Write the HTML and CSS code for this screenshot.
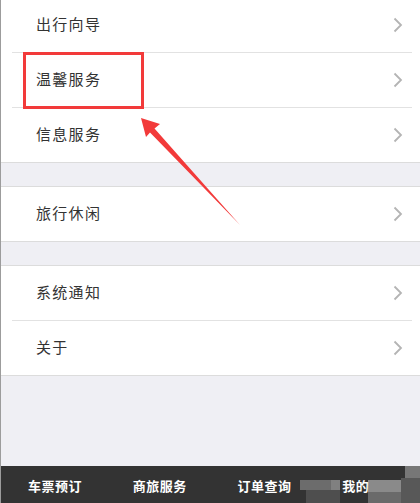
FILE: index.html
```html
<!DOCTYPE html>
<html lang="zh">
<head>
<meta charset="utf-8">
<link rel="stylesheet" href="styles.css">
</head>
<body>
<div class="page">
  <div class="group group-first">
    <div class="row"><span class="label">出行向导</span><svg class="chev" viewBox="0 0 10 16"><path d="M1.5 1.5 L8 8 L1.5 14.5"/></svg></div>
    <div class="row"><span class="label">温馨服务</span><svg class="chev" viewBox="0 0 10 16"><path d="M1.5 1.5 L8 8 L1.5 14.5"/></svg></div>
    <div class="row"><span class="label">信息服务</span><svg class="chev" viewBox="0 0 10 16"><path d="M1.5 1.5 L8 8 L1.5 14.5"/></svg></div>
  </div>
  <div class="group">
    <div class="row"><span class="label">旅行休闲</span><svg class="chev" viewBox="0 0 10 16"><path d="M1.5 1.5 L8 8 L1.5 14.5"/></svg></div>
  </div>
  <div class="group">
    <div class="row"><span class="label">系统通知</span><svg class="chev" viewBox="0 0 10 16"><path d="M1.5 1.5 L8 8 L1.5 14.5"/></svg></div>
    <div class="row"><span class="label">关于</span><svg class="chev" viewBox="0 0 10 16"><path d="M1.5 1.5 L8 8 L1.5 14.5"/></svg></div>
  </div>
  <nav class="tabbar">
    <span class="tab">车票预订</span>
    <span class="tab">商旅服务</span>
    <span class="tab">订单查询</span>
    <span class="tab">我的</span>
    <span class="mosaic m1"></span>
    <span class="mosaic m2"></span>
    <span class="mosaic m3"></span>
    <span class="mosaic m4"></span>
    <span class="mosaic m5"></span>
    <span class="mosaic m6"></span>
    <span class="mosaic m7"></span>
  </nav>
  <div class="highlight"></div>
  <svg class="arrow" viewBox="0 0 420 503"><polygon points="140,118 159,124 153.5,128.5 239,225 149,132.5 145,137"/></svg>
</div>
</body>
</html>
```

FILE: styles.css
```css
html, body {
  margin: 0;
  padding: 0;
}
body {
  font-family: "Noto Sans CJK SC", "Noto Sans", sans-serif;
  background: #efeff4;
}
.page {
  position: relative;
  height: 503px;
  overflow: hidden;
  display: flex;
  flex-direction: column;
  box-sizing: border-box;
  border-left: 1px solid #9c9c9c;
  background: #efeff4;
}
.group {
  background: #fff;
  border-top: 1px solid #dcdcdc;
  border-bottom: 1px solid #dcdcdc;
  margin-top: 23px;
}
.group-first {
  margin-top: -2px;
  border-top: none;
}
.row {
  height: 54px;
  display: flex;
  align-items: center;
  justify-content: space-between;
  padding: 0 17px 0 35px;
  position: relative;
}
.row + .row::before {
  content: "";
  position: absolute;
  top: -1px;
  left: 11px;
  right: 8px;
  height: 1px;
  background: #e2e2e2;
}
.row + .row {
  margin-top: 1px;
}
.label {
  font-size: 15px;
  letter-spacing: 1.3px;
  color: #333;
  margin-bottom: 4px;
}
.chev {
  width: 10px;
  height: 16px;
  fill: none;
  stroke: #b4b4b4;
  stroke-width: 1.8;
}
.tabbar {
  margin-top: auto;
  height: 37px;
  background: #333;
  display: grid;
  grid-template-columns: repeat(4, 1fr);
  position: relative;
}
.tab {
  color: #fff;
  font-size: 13px;
  font-weight: bold;
  letter-spacing: 0.5px;
  padding: 10px 0 0 27px;
  position: relative;
  z-index: 1;
}
.mosaic {
  position: absolute;
}
.m1 { left: 299px; top: 14px; width: 40px; height: 10px; background: #6c6c6c; }
.m2 { left: 305px; top: 24px; width: 34px; height: 13px; background: #4e4e4e; }
.m3 { left: 367px; top: 14px; width: 33px; height: 12px; background: #8a8a8a; }
.m4 { left: 367px; top: 26px; width: 33px; height: 11px; background: #6a6a6a; }
.m5 { left: 404px; top: 0; width: 16px; height: 12px; background: #777; }
.m6 { left: 400px; top: 12px; width: 20px; height: 25px; background: #585858; }
.m7 { left: 330px; top: 14px; width: 9px; height: 10px; background: #808080; }
.highlight {
  position: absolute;
  left: 22px;
  top: 52px;
  width: 115px;
  height: 51px;
  border: 3px solid #f23a3a;
}
.arrow {
  position: absolute;
  left: 0;
  top: 0;
  width: 420px;
  height: 503px;
  fill: #f23a3a;
}
```
